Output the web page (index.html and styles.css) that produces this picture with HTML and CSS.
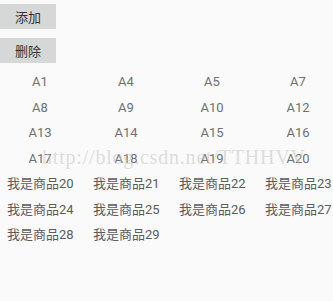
FILE: index.html
```html
<!DOCTYPE html>
<html lang="zh">
<head>
<meta charset="utf-8">
<link rel="stylesheet" href="styles.css">
</head>
<body>
<div class="page">
  <div class="actions">
    <button class="btn">添加</button>
    <button class="btn">删除</button>
  </div>
  <div class="tags">
    <span>A1</span><span>A4</span><span>A5</span><span>A7</span>
    <span>A8</span><span>A9</span><span>A10</span><span>A12</span>
    <span>A13</span><span>A14</span><span>A15</span><span>A16</span>
    <span>A17</span><span>A18</span><span>A19</span><span>A20</span>
  </div>
  <div class="goods">
    <span>我是商品20</span><span>我是商品21</span><span>我是商品22</span><span>我是商品23</span>
    <span>我是商品24</span><span>我是商品25</span><span>我是商品26</span><span>我是商品27</span>
    <span>我是商品28</span><span>我是商品29</span>
  </div>
  <div class="watermark">http://blog.csdn.net/TTHHVV</div>
</div>
</body>
</html>
```
FILE: styles.css
```css
html, body {
  margin: 0;
  padding: 0;
  background: #fafafa;
}
.page {
  position: relative;
  width: 333px;
  height: 301px;
  overflow: hidden;
  font-family: Roboto, "Noto Sans CJK SC", sans-serif;
}
.actions {
  display: flex;
  flex-direction: column;
  align-items: flex-start;
  gap: 9px;
  padding-top: 4px;
}
.btn {
  width: 56px;
  height: 25px;
  margin: 0;
  padding: 0;
  border: none;
  background: #d6d7d7;
  color: #333;
  font-family: "Noto Sans CJK SC", sans-serif;
  font-size: 13px;
  line-height: 25px;
}
.tags {
  display: grid;
  grid-template-columns: repeat(4, 86px);
  grid-auto-rows: 25.5px;
  margin-left: -3px;
  margin-top: 6px;
  color: #707070;
  font-size: 13px;
}
.tags span {
  text-align: center;
  line-height: 25.5px;
}
.goods {
  display: grid;
  grid-template-columns: repeat(4, 86px);
  grid-auto-rows: 25.7px;
  padding-left: 7px;
  color: #5c5c5c;
  font-size: 13px;
}
.goods span {
  line-height: 25.7px;
  white-space: nowrap;
}
.watermark {
  position: absolute;
  left: 42px;
  top: 146px;
  font-family: "Liberation Serif", serif;
  font-size: 20px;
  color: rgba(195, 195, 195, 0.55);
  letter-spacing: 0.8px;
  white-space: nowrap;
  pointer-events: none;
}
```
